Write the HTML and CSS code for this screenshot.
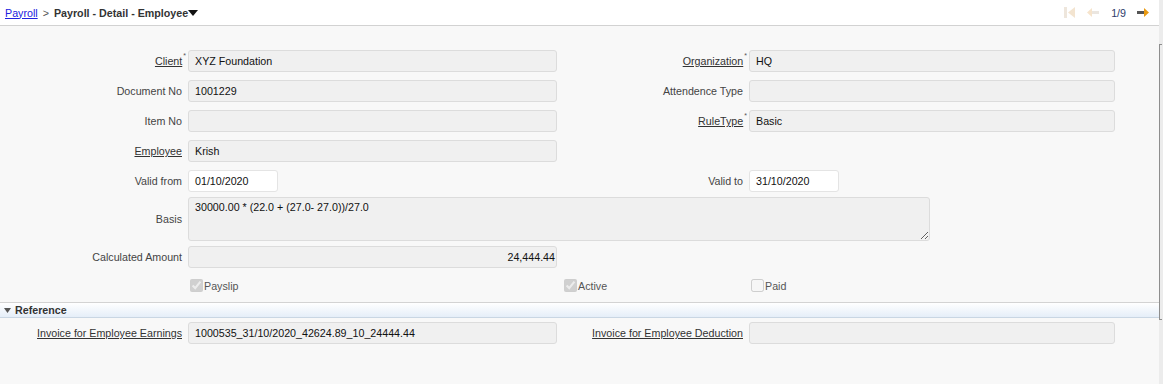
FILE: index.html
```html
<!DOCTYPE html>
<html lang="en">
<head>
    <meta charset="UTF-8">
    <title>Payroll - Detail - Employee</title>
    <link rel="stylesheet" href="styles.css">
</head>
<body>
    <div class="page">
        <div class="toolbar">
            <div class="crumbs">
                <a href="#">Payroll</a>
                <span class="sep">&gt;</span>
                <span class="title">Payroll - Detail - Employee</span><svg class="caret" width="10" height="6" viewBox="0 0 10 6"><polygon points="0,0 10,0 5,6" fill="#111"/></svg>
            </div>
            <div class="nav">
                <svg class="nav-icon" width="12" height="11" viewBox="0 0 12 11">
                    <rect x="0" y="0" width="3" height="11" fill="#eee6dc"/>
                    <polygon points="11,0 11,11 4,5.5" fill="#f3e4d0"/>
                </svg>
                <svg class="nav-icon" width="12" height="11" viewBox="0 0 12 11">
                    <polygon points="0,5.5 5,1 5,10" fill="#f6e4cc"/>
                    <rect x="5" y="4" width="7" height="3" fill="#ebe6e0"/>
                </svg>
                <span class="count">1/9</span>
                <svg class="nav-icon" width="12" height="11" viewBox="0 0 12 11">
                    <rect x="0" y="4" width="7" height="3" fill="#555"/>
                    <polygon points="12,5.5 7,1 7,10" fill="#e99a12"/>
                </svg>
            </div>
        </div>

        <div class="form-grid">
            <label class="lbl link">Client<sup>*</sup></label>
            <div class="field">XYZ Foundation</div>
            <label class="lbl link">Organization<sup>*</sup></label>
            <div class="field">HQ</div>

            <label class="lbl">Document No</label>
            <div class="field">1001229</div>
            <label class="lbl">Attendence Type</label>
            <div class="field"></div>

            <label class="lbl">Item No</label>
            <div class="field"></div>
            <label class="lbl link">RuleType<sup>*</sup></label>
            <div class="field">Basic</div>

            <label class="lbl link">Employee</label>
            <div class="field">Krish</div>
            <div></div>
            <div></div>

            <label class="lbl">Valid from</label>
            <div class="field date">01/10/2020</div>
            <label class="lbl">Valid to</label>
            <div class="field date">31/10/2020</div>
        </div>

        <div class="form-grid tight">
            <label class="lbl">Basis</label>
            <textarea class="basis" readonly>30000.00 * (22.0 + (27.0- 27.0))/27.0</textarea>

            <label class="lbl">Calculated Amount</label>
            <div class="field number">24,444.44</div>
        </div>

        <div class="form-grid checks">
            <div></div>
            <label class="check"><input type="checkbox" checked disabled> Payslip</label>
            <label class="check active"><input type="checkbox" checked disabled> Active</label>
            <label class="check"><input type="checkbox" disabled> Paid</label>
        </div>

        <div class="section-bar"><svg class="bar-caret" width="7" height="5" viewBox="0 0 7 5"><polygon points="0,0 7,0 3.5,5" fill="#555"/></svg>Reference</div>

        <div class="form-grid">
            <label class="lbl link">Invoice for Employee Earnings</label>
            <div class="field">1000535_31/10/2020_42624.89_10_24444.44</div>
            <label class="lbl link">Invoice for Employee Deduction</label>
            <div class="field"></div>
        </div>
    </div>
    <div class="edge"><div class="edge-mark"></div></div>
</body>
</html>
```

FILE: styles.css
```css
/* General */
body {
    margin: 0;
    display: flex;
    min-height: 384px;
    font-family: "Liberation Sans", Arial, sans-serif;
    font-size: 10.7px;
    color: #333;
    background-color: #f8f8f8;
}
.page {
    flex: 1;
}
.edge {
    width: 4px;
    background-color: #ececec;
}
.edge-mark {
    margin-top: 44px;
    height: 274px;
    width: 2px;
    border: 1px solid #8e8e8e;
    border-right: none;
}

/* Toolbar */
.toolbar {
    height: 25px;
    background-color: #ffffff;
    border-bottom: 1px solid #d2d2d2;
    display: flex;
    justify-content: space-between;
    align-items: center;
    padding: 0 10px 0 5px;
}
.crumbs {
    display: flex;
    align-items: center;
}
.crumbs a {
    color: #2020e0;
}
.sep {
    color: #555;
    margin: 0 5px 0 5px;
}
.title {
    font-weight: bold;
    color: #333;
}
.caret {
    margin-left: 0;
}
.nav {
    display: flex;
    align-items: center;
    gap: 11px;
}
.count {
    color: #2d3a6a;
    margin-left: 1px;
}

/* Form */
.form-grid {
    display: grid;
    grid-template-columns: 188px 369px 192px 366px;
    grid-auto-rows: 22px;
    row-gap: 8px;
}
.form-grid:nth-child(2) {
    margin-top: 24px;
}
.form-grid.tight {
    margin-top: 5px;
    row-gap: 5px;
    grid-template-rows: 44px 22px;
}
.lbl {
    align-self: center;
    text-align: right;
    padding-right: 6px;
    color: #444;
    white-space: nowrap;
}
.lbl.link {
    color: #333;
    text-decoration: underline;
}
.lbl sup {
    font-size: 7px;
    text-decoration: none;
    display: inline-block;
    vertical-align: top;
    margin: -3px -4px 0 1px;
    color: #555;
}
.field {
    box-sizing: border-box;
    background-color: #f0f0f0;
    border: 1px solid #dcdcdc;
    border-radius: 3px;
    padding: 0 6px;
    line-height: 20px;
    color: #111;
}
.field.date {
    width: 90px;
    background-color: #ffffff;
    border-color: #e4e4e4;
}
.field.number {
    text-align: right;
    padding-right: 1px;
}
.basis {
    grid-column: 2 / 5;
    width: 742px;
    box-sizing: border-box;
    margin: 0;
    background-color: #f0f0f0;
    border: 1px solid #dcdcdc;
    border-radius: 3px;
    padding: 3px 6px;
    font-family: "Liberation Sans", Arial, sans-serif;
    font-size: 10.7px;
    color: #111;
    resize: both;
}

/* Checkboxes */
.checks {
    margin-top: 11px;
    grid-auto-rows: 13px;
}
.check {
    display: flex;
    align-items: center;
    gap: 1px;
    color: #555;
}
.check input {
    margin: 0 0 0 2px;
    width: 13px;
    height: 13px;
}
.check.active input {
    margin-left: 7px;
}

/* Section bar */
.section-bar {
    margin-top: 10px;
    height: 14px;
    display: flex;
    align-items: center;
    border-top: 1px solid #d3d3d3;
    border-bottom: 1px solid #c9d6e3;
    background: linear-gradient(#ffffff, #e5eef8);
    padding-left: 4px;
    font-weight: bold;
    color: #333;
    margin-bottom: 4px;
}
.bar-caret {
    margin-right: 4px;
}
```
